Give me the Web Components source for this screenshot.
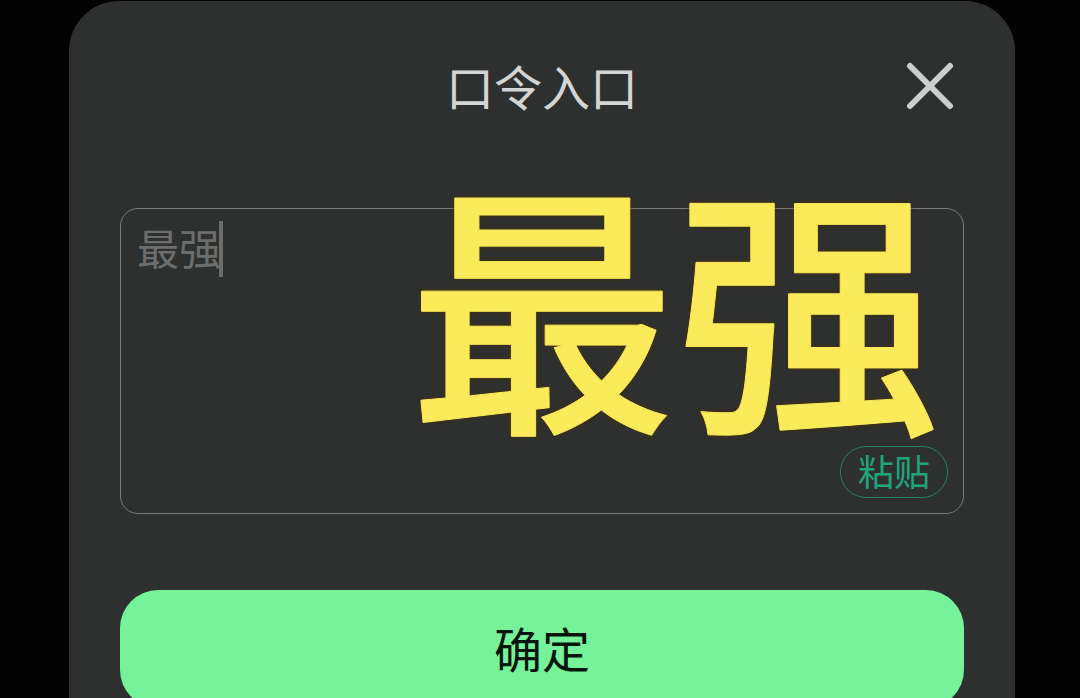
<!DOCTYPE html>
<html lang="zh-CN">
<head>
<meta charset="utf-8">
<meta name="viewport" content="width=device-width, initial-scale=1">
<title>口令入口</title>
<style>
  body {
    margin: 0;
    height: 100vh;
    overflow: hidden;
    background: #030303;
    font-family: "Noto Sans CJK SC", sans-serif;
  }
</style>
</head>
<body>
<code-dialog>
  <span slot="title">口令入口</span>
  <code-field value="最强">
    <big-caption>最强</big-caption>
  </code-field>
  <confirm-button slot="action">确定</confirm-button>
</code-dialog>

<script>
class CodeDialog extends HTMLElement {
  constructor() {
    super();
    this.attachShadow({ mode: 'open' });
  }

  getTemplate() {
    const template = document.createElement('template');
    template.innerHTML = `
      <section role="dialog" aria-labelledby="title">
        <header>
          <h1 id="title"><slot name="title"></slot></h1>
          <button type="button" aria-label="关闭">
            <svg viewBox="0 0 48 48" width="48" height="48" aria-hidden="true">
              <path d="M4 4 L44 44 M44 4 L4 44" />
            </svg>
          </button>
        </header>
        <slot></slot>
        <slot name="action"></slot>
      </section>
    ${this.getStyles()}
    `;
    return template;
  }

  getStyles() {
    return `
    <style>
      :host{
        display: block;
        padding: 1px 65px 0 69px;
      }
      section{
        display: flex;
        flex-direction: column;
        gap: 76px;
        padding: 49px 51px;
        border-radius: 50px 50px 0 0;
        background: #2e302f;
      }
      header{
        display: grid;
        grid-template-columns: 1fr auto 1fr;
        align-items: center;
        padding-right: 10px;
        padding-left: 10px;
        margin-bottom: 11px;
      }
      h1{
        grid-column: 2;
        margin: 0;
        font-size: 48px;
        font-weight: 400;
        line-height: 71px;
        color: #d4d6d5;
      }
      button{
        justify-self: end;
        display: flex;
        padding: 0;
        border: 0;
        background: none;
        cursor: pointer;
      }
      path{
        fill: none;
        stroke: #cdcfce;
        stroke-width: 6;
        stroke-linecap: round;
      }
    </style>
    `;
  }

  connectedCallback() {
    this.shadowRoot.appendChild(this.getTemplate().content.cloneNode(true));
  }
}

class CodeField extends HTMLElement {
  constructor() {
    super();
    this.attachShadow({ mode: 'open' });
  }

  getTemplate() {
    const template = document.createElement('template');
    template.innerHTML = `
      <textarea aria-label="口令" spellcheck="false"></textarea>
      <span class="caret"></span>
      <button type="button">粘贴</button>
      <slot></slot>
    ${this.getStyles()}
    `;
    return template;
  }

  getStyles() {
    return `
    <style>
      :host{
        display: block;
        position: relative;
        font-size: 42px;
      }
      textarea{
        display: block;
        box-sizing: border-box;
        width: 100%;
        height: 306px;
        padding: 10px 16px;
        border: 1px solid #7b7d7c;
        border-radius: 18px;
        outline: 0;
        resize: none;
        background: transparent;
        color: #6c6e6d;
        caret-color: transparent;
        font-family: inherit;
        font-size: inherit;
        font-weight: 400;
        line-height: 56px;
      }
      /* sits after the two characters of the value */
      .caret{
        position: absolute;
        top: 13px;
        left: calc(15px + 2em);
        width: 4px;
        height: 56px;
        background: #6c6e6d;
      }
      button{
        position: absolute;
        right: 16px;
        bottom: 16px;
        height: 52px;
        padding: 0 17px 4px;
        border: 1px solid #2a8064;
        border-radius: 26px;
        background: transparent;
        color: #1fa57b;
        font-family: inherit;
        font-size: 36px;
        line-height: 46px;
        cursor: pointer;
      }
    </style>
    `;
  }

  connectedCallback() {
    this.shadowRoot.appendChild(this.getTemplate().content.cloneNode(true));
    this.shadowRoot.querySelector('textarea').value = this.getAttribute('value') || '';
  }
}

class BigCaption extends HTMLElement {
  constructor() {
    super();
    this.attachShadow({ mode: 'open' });
  }

  getTemplate() {
    const template = document.createElement('template');
    template.innerHTML = `
      <slot></slot>
    ${this.getStyles()}
    `;
    return template;
  }

  getStyles() {
    return `
    <style>
      :host{
        position: absolute;
        top: -30px;
        right: 23px;
        color: #fbea59;
        font-size: 266px;
        font-weight: 500;
        line-height: 240px;
        white-space: nowrap;
        -webkit-text-stroke: 1px #fbea59;
        text-shadow: 0 0 5px #4a2c00;
        pointer-events: none;
      }
    </style>
    `;
  }

  connectedCallback() {
    this.shadowRoot.appendChild(this.getTemplate().content.cloneNode(true));
  }
}

class ConfirmButton extends HTMLElement {
  constructor() {
    super();
    this.attachShadow({ mode: 'open' });
  }

  getTemplate() {
    const template = document.createElement('template');
    template.innerHTML = `
      <button type="button"><slot></slot></button>
    ${this.getStyles()}
    `;
    return template;
  }

  getStyles() {
    return `
    <style>
      :host{
        display: block;
      }
      button{
        display: block;
        width: 100%;
        height: 118px;
        padding: 0 0 4px;
        border: 0;
        border-radius: 38px;
        background: #76f39a;
        color: #061509;
        font-family: inherit;
        font-size: 48px;
        cursor: pointer;
      }
    </style>
    `;
  }

  connectedCallback() {
    this.shadowRoot.appendChild(this.getTemplate().content.cloneNode(true));
  }
}

customElements.define('code-dialog', CodeDialog);
customElements.define('code-field', CodeField);
customElements.define('big-caption', BigCaption);
customElements.define('confirm-button', ConfirmButton);
</script>
</body>
</html>
